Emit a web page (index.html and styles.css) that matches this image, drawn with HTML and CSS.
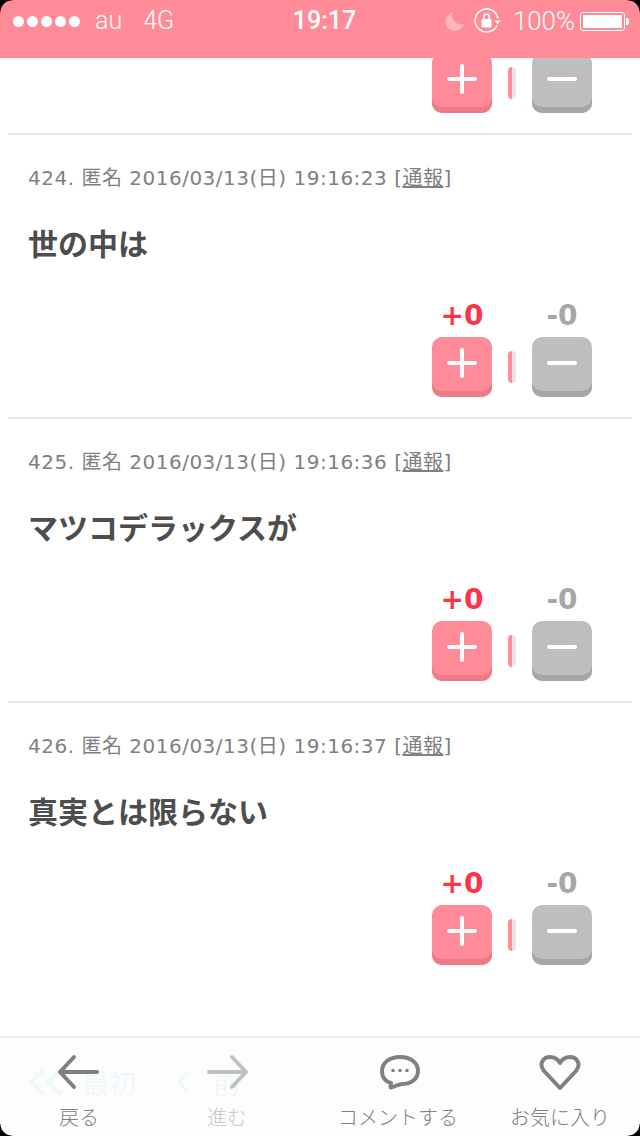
FILE: index.html
```html
<!DOCTYPE html>
<html lang="ja">
<head>
    <meta charset="UTF-8">
    <meta name="viewport" content="width=device-width, initial-scale=1.0">
    <title>コメント</title>
    <link rel="stylesheet" href="styles.css">
</head>
<body>
    <div class="screen">
        <header class="status-bar">
            <div class="status-left">
                <div class="signal"><i></i><i></i><i></i><i></i><i></i></div>
                <span class="carrier">au</span>
                <span class="network">4G</span>
            </div>
            <div class="status-time">19:17</div>
            <div class="status-right">
                <svg class="moon" width="20" height="20" viewBox="0 0 20 20"><path d="M8 1A9.5 9.5 0 1 0 19 13A9 9 0 0 1 8 1Z" fill="#ffb6bf"/></svg>
                <svg class="rotation-lock" width="28" height="28" viewBox="0 0 28 28">
                    <path d="M24 18.5A11.5 11.5 0 1 1 25 11.5" fill="none" stroke="#fff" stroke-width="1.6"/>
                    <path d="M21.5 13.5h6l-3 4z" fill="#fff"/>
                    <rect x="8.5" y="12" width="10" height="8.5" rx="1" fill="#fff"/>
                    <path d="M10.8 12V9.8a2.7 2.7 0 0 1 5.4 0V12" fill="none" stroke="#fff" stroke-width="1.6"/>
                </svg>
                <span class="battery-text">100%</span>
                <div class="battery"><div class="battery-level"></div></div>
            </div>
        </header>

        <main class="list">
            <div class="comment-tail">
                <div class="votes">
                    <button class="vote-btn plus"><svg width="30" height="30" viewBox="0 0 30 30"><path d="M15 2v26M2 15h26" stroke="#fff" stroke-width="4" stroke-linecap="round"/></svg></button>
                    <div class="rate"></div>
                    <button class="vote-btn minus"><svg width="30" height="30" viewBox="0 0 30 30"><path d="M2 15h26" stroke="#fff" stroke-width="4" stroke-linecap="round"/></svg></button>
                </div>
            </div>

            <article class="comment">
                <div class="meta">424. 匿名 2016/03/13(日) 19:16:23 [<a href="#">通報</a>]</div>
                <p class="body">世の中は</p>
                <div class="votes">
                    <span class="count plus-count">+0</span>
                    <span></span>
                    <span class="count minus-count">-0</span>
                    <button class="vote-btn plus"><svg width="30" height="30" viewBox="0 0 30 30"><path d="M15 2v26M2 15h26" stroke="#fff" stroke-width="4" stroke-linecap="round"/></svg></button>
                    <div class="rate"></div>
                    <button class="vote-btn minus"><svg width="30" height="30" viewBox="0 0 30 30"><path d="M2 15h26" stroke="#fff" stroke-width="4" stroke-linecap="round"/></svg></button>
                </div>
            </article>

            <article class="comment">
                <div class="meta">425. 匿名 2016/03/13(日) 19:16:36 [<a href="#">通報</a>]</div>
                <p class="body">マツコデラックスが</p>
                <div class="votes">
                    <span class="count plus-count">+0</span>
                    <span></span>
                    <span class="count minus-count">-0</span>
                    <button class="vote-btn plus"><svg width="30" height="30" viewBox="0 0 30 30"><path d="M15 2v26M2 15h26" stroke="#fff" stroke-width="4" stroke-linecap="round"/></svg></button>
                    <div class="rate"></div>
                    <button class="vote-btn minus"><svg width="30" height="30" viewBox="0 0 30 30"><path d="M2 15h26" stroke="#fff" stroke-width="4" stroke-linecap="round"/></svg></button>
                </div>
            </article>

            <article class="comment">
                <div class="meta">426. 匿名 2016/03/13(日) 19:16:37 [<a href="#">通報</a>]</div>
                <p class="body">真実とは限らない</p>
                <div class="votes">
                    <span class="count plus-count">+0</span>
                    <span></span>
                    <span class="count minus-count">-0</span>
                    <button class="vote-btn plus"><svg width="30" height="30" viewBox="0 0 30 30"><path d="M15 2v26M2 15h26" stroke="#fff" stroke-width="4" stroke-linecap="round"/></svg></button>
                    <div class="rate"></div>
                    <button class="vote-btn minus"><svg width="30" height="30" viewBox="0 0 30 30"><path d="M2 15h26" stroke="#fff" stroke-width="4" stroke-linecap="round"/></svg></button>
                </div>
            </article>

            <nav class="pager">
                <svg width="36" height="30" viewBox="0 0 36 30"><path d="M16 2L3 15l13 13M33 2L20 15l13 13" fill="none" stroke="#7fd0e6" stroke-width="4"/></svg>
                <span class="pager-first">最初</span>
                <svg class="pager-prev" width="14" height="24" viewBox="0 0 14 24"><path d="M12 2L3 12l9 10" fill="none" stroke="#7fd0e6" stroke-width="3"/></svg>
                <span class="pager-before">前</span>
            </nav>
        </main>

        <footer class="tab-bar">
            <div class="tab">
                <svg width="44" height="36" viewBox="0 0 44 36"><path d="M17 3L3 18l14 15M3 18h37" fill="none" stroke="#808080" stroke-width="4" stroke-linecap="round" stroke-linejoin="round"/></svg>
                <span>戻る</span>
            </div>
            <div class="tab disabled">
                <svg width="44" height="36" viewBox="0 0 44 36"><path d="M27 3l14 15-14 15M41 18H4" fill="none" stroke="#c0c0c0" stroke-width="4" stroke-linecap="round" stroke-linejoin="round"/></svg>
                <span>進む</span>
            </div>
            <div class="tab">
                <svg width="44" height="36" viewBox="-2 0 44 36">
                    <path d="M13 33.5C12 33.5 12.5 32 13 29C6 27 4 22.500 4 17.500C4 9 11 3 22 3C33 3 40 9 40 17C40 25 33 30 24 30C21 30 17 32.500 13 33.500Z" fill="none" stroke="#808080" stroke-width="4" stroke-linejoin="round"/>
                    <circle cx="15" cy="16.500" r="1.800" fill="#808080"/><circle cx="22" cy="16.500" r="1.800" fill="#808080"/><circle cx="29" cy="16.500" r="1.800" fill="#808080"/>
                </svg>
                <span>コメントする</span>
            </div>
            <div class="tab">
                <svg width="44" height="36" viewBox="0 0 44 36"><path d="M22 34L6 17C0 9 6 3 12 3C17 3 20 5.500 22 9C24 5.500 27 3 32 3C38 3 44 9 38 17Z" fill="none" stroke="#808080" stroke-width="4" stroke-linejoin="round"/></svg>
                <span>お気に入り</span>
            </div>
        </footer>

        <div class="corner top-left"></div>
        <div class="corner top-right"></div>
        <div class="corner bottom-left"></div>
        <div class="corner bottom-right"></div>
    </div>
</body>
</html>
```

FILE: styles.css
```css
* {
    box-sizing: border-box;
}

body {
    margin: 0;
    background: #fff;
    font-family: "DejaVu Sans", "Noto Sans CJK JP", sans-serif;
}

.screen {
    width: 640px;
    height: 1136px;
    position: relative;
    overflow: hidden;
    display: flex;
    flex-direction: column;
}

/* status bar */
.status-bar {
    height: 58px;
    flex-shrink: 0;
    background: #ff8b98;
    color: #fff;
    display: grid;
    grid-template-columns: 1fr auto 1fr;
    align-items: start;
    padding: 8px 12px 0 13px;
    font-family: "Roboto", sans-serif;
    font-weight: 300;
    font-size: 25px;
    line-height: 26px;
}

.status-left,
.status-right {
    display: flex;
    align-items: center;
    height: 26px;
}

.signal {
    display: flex;
    gap: 3px;
    margin-right: 15px;
}

.signal i {
    width: 11px;
    height: 11px;
    border-radius: 50%;
    background: #fff;
}

.carrier {
    margin-right: 21px;
}

.status-time {
    font-weight: 500;
    margin-left: 8px;
}

.status-right {
    justify-content: flex-end;
}

.moon {
    margin-right: 8px;
}

.rotation-lock {
    margin-right: 12px;
}

.battery-text {
    font-size: 25.8px;
    margin-right: 5px;
}

.battery {
    width: 45px;
    height: 19px;
    position: relative;
    border: 1px solid #fff;
    border-radius: 3px;
    padding: 2px;
    margin-right: 3px;
}

.battery::after {
    content: "";
    position: absolute;
    right: -5px;
    top: 5px;
    width: 3px;
    height: 7px;
    background: #fff;
    border-radius: 0 2px 2px 0;
}

.battery-level {
    height: 100%;
    background: #fff;
    border-radius: 1px;
}

/* comments */
.list {
    flex: 1;
    overflow: hidden;
}

.comment-tail {
    margin: -5px 8px 0;
    padding: 0 40px 20px 0;
    height: 80px;
}

.comment {
    margin: 0 8px;
    padding: 28px 40px 20px 20px;
    height: 284px;
    border-top: 2px solid #e6e6e6;
}

.meta {
    font-size: 20px;
    line-height: 30px;
    letter-spacing: 0.5px;
    color: #808080;
    white-space: nowrap;
}

.meta a {
    color: #808080;
    text-decoration: underline;
}

.body {
    margin: 27px 0 0;
    font-family: "Noto Sans CJK JP", sans-serif;
    font-size: 30px;
    line-height: 44px;
    font-weight: bold;
    color: #4d4d4d;
}

.votes {
    display: grid;
    grid-template-columns: 60px 8px 60px;
    column-gap: 16px;
    row-gap: 7px;
    justify-content: end;
    align-items: start;
}

.comment .votes {
    margin-top: 36px;
}

.count {
    font-family: "DejaVu Sans", sans-serif;
    font-weight: bold;
    font-size: 28px;
    line-height: 32px;
    height: 30px;
    text-align: center;
}

.plus-count {
    color: #ff3347;
}

.minus-count {
    color: #a6a6a6;
}

.vote-btn {
    width: 60px;
    height: 60px;
    border: none;
    border-radius: 10px;
    padding: 0 0 8px;
    display: flex;
    align-items: center;
    justify-content: center;
}

.vote-btn.plus {
    background: #ff8b98;
    box-shadow: inset 0 -6px 0 #ec7b88;
}

.vote-btn.minus {
    background: #bebebe;
    box-shadow: inset 0 -6px 0 #a6a6a6;
}

.rate {
    height: 32px;
    margin-top: 14px;
    border-radius: 4px;
    background: linear-gradient(90deg, #ff8b98 50%, #e6e6e6 50%);
}

/* pager hidden under the tab bar */
.pager {
    display: flex;
    align-items: center;
    height: 40px;
    margin-top: 77px;
    padding-left: 28px;
    font-family: "Noto Sans CJK JP", sans-serif;
    font-size: 27px;
    color: #7fd0e6;
}

.pager-first {
    margin-left: 18px;
}

.pager-prev {
    margin-left: 40px;
}

.pager-before {
    margin-left: 23px;
}

/* bottom toolbar */
.tab-bar {
    position: absolute;
    left: 0;
    right: 0;
    bottom: 0;
    height: 100px;
    background: rgba(253, 253, 253, 0.88);
    border-top: 2px solid #efefef;
    display: grid;
    grid-template-columns: 158px 138px 204px 120px;
    padding-right: 20px;
}

.tab {
    display: flex;
    flex-direction: column;
    align-items: center;
    padding-top: 16px;
    font-family: "Noto Sans CJK JP", sans-serif;
    font-weight: 300;
    font-size: 20px;
    line-height: 30px;
    color: #808080;
    white-space: nowrap;
}

.tab span {
    margin-top: 12px;
}

.tab.disabled {
    color: #c8c8c8;
}

/* rounded screen corners */
.corner {
    position: absolute;
    width: 12px;
    height: 12px;
}

.top-left {
    top: 0;
    left: 0;
    background: radial-gradient(circle at 100% 100%, transparent 11px, #000 12px);
}

.top-right {
    top: 0;
    right: 0;
    background: radial-gradient(circle at 0 100%, transparent 11px, #000 12px);
}

.bottom-left {
    bottom: 0;
    left: 0;
    background: radial-gradient(circle at 100% 0, transparent 11px, #000 12px);
}

.bottom-right {
    bottom: 0;
    right: 0;
    background: radial-gradient(circle at 0 0, transparent 11px, #000 12px);
}
```
